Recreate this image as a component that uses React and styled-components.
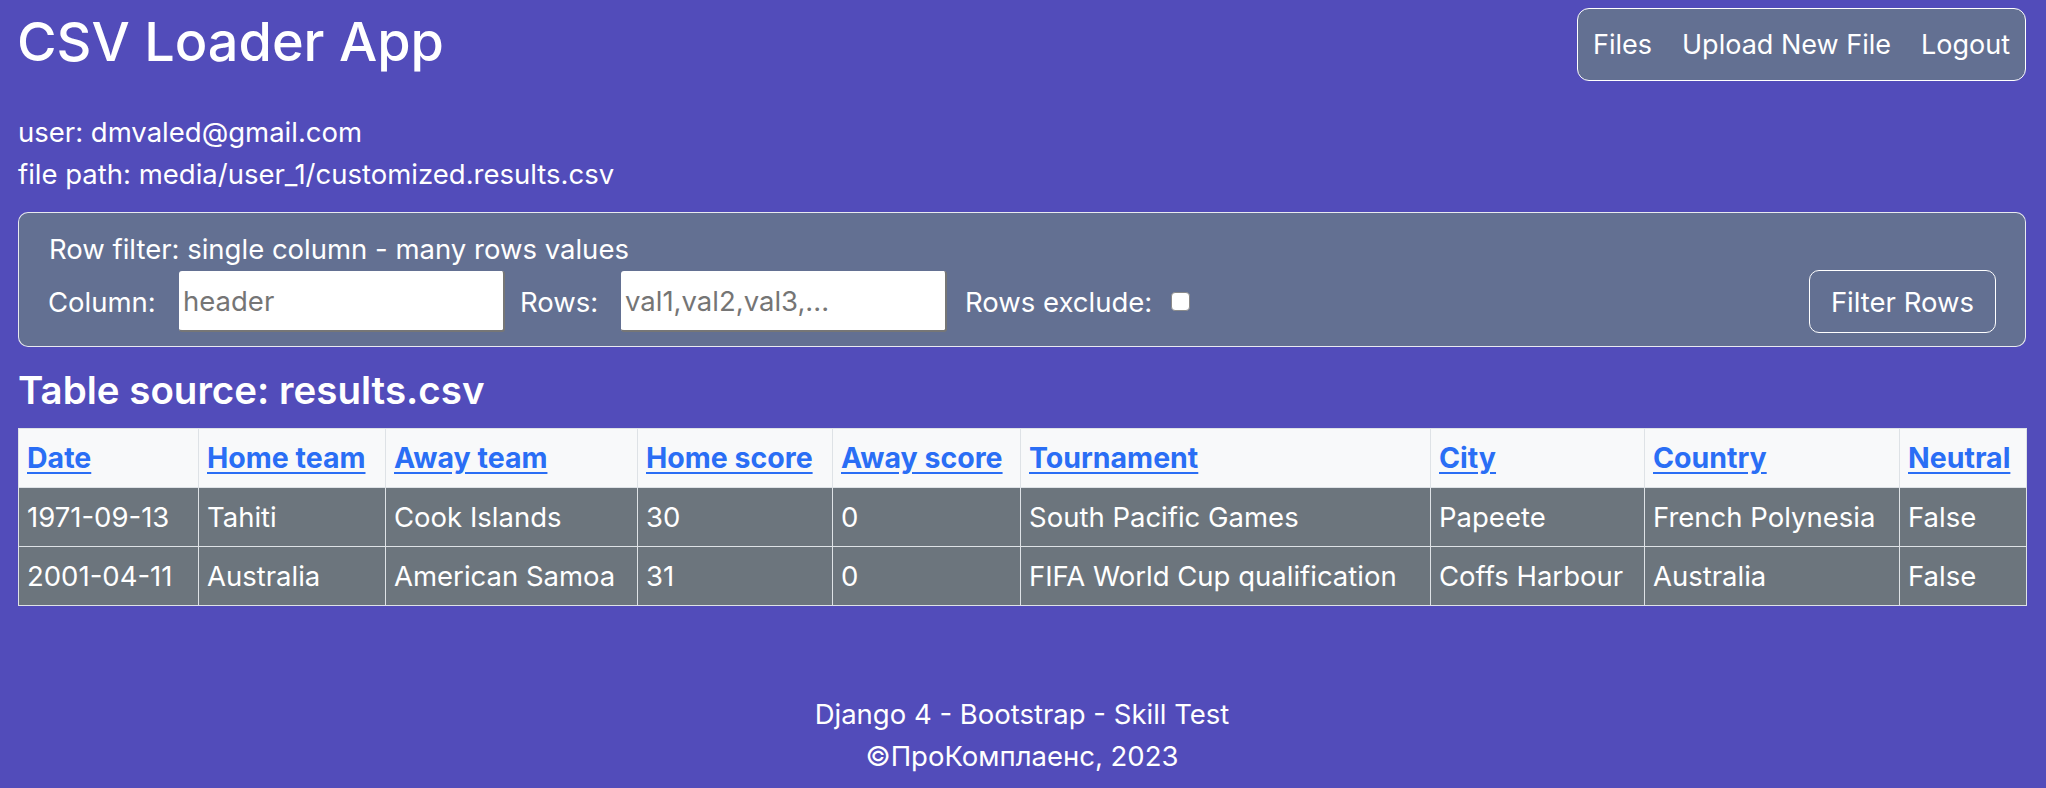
import React from 'react';
import styled, { createGlobalStyle } from 'styled-components';

const GlobalStyle = createGlobalStyle`
  body {
    margin: 0;
    background: #524cba;
    color: #fff;
    font-family: Inter, "Noto Sans", sans-serif;
    font-size: 27.5px;
    line-height: 42px;
  }
`;

const Page = styled.div`
  padding: 0 20px 0 18px;
`;

const Header = styled.header`
  display: flex;
  justify-content: space-between;
  align-items: flex-start;
  padding-top: 8px;
`;

const Title = styled.h1`
  margin: 1px 0 0 -1px;
  font-size: 54px;
  font-weight: 500;
  line-height: 66px;
`;

const Nav = styled.nav`
  display: flex;
  height: 71px;
  align-items: center;
  background: #637092;
  border: 1px solid #fff;
  border-radius: 12px;
`;

const NavLink = styled.a`
  color: #fff;
  text-decoration: none;
  padding: 0 15px;
  font-size: 27px;
`;

const Info = styled.div`
  margin-top: 30px;
`;

const Panel = styled.form`
  margin-top: 17px;
  background: #637092;
  border: 1px solid rgba(255, 255, 255, 0.85);
  border-radius: 10px;
  padding: 15px 29px 13px 29px;
`;

const Caption = styled.div`
  padding-left: 1px;
`;

const FilterRow = styled.div`
  display: flex;
  align-items: center;
  height: 63px;
`;

const Label = styled.label`
  flex: none;
  width: ${(p) => p.$w}px;
  margin-left: ${(p) => p.$ml || 0}px;
`;

const TextInput = styled.input`
  box-sizing: border-box;
  width: 326px;
  height: 61px;
  border: none;
  border-right: 2px solid #767676;
  border-bottom: 2px solid #767676;
  border-radius: 3px;
  background: #fff;
  padding: 0 4px;
  font-family: Inter, "Noto Sans", sans-serif;
  font-size: 27.5px;
  color: #212529;

  &::placeholder {
    color: #757575;
  }
`;

const Check = styled.input`
  appearance: none;
  margin: 0 0 0 -2px;
  width: 19px;
  height: 19px;
  background: #fff;
  border: 1px solid #8a8a8a;
  border-radius: 4px;
`;

const Button = styled.button`
  margin-left: auto;
  height: 63px;
  padding: 0 21px;
  background: transparent;
  color: #fff;
  border: 1px solid #fff;
  border-radius: 10px;
  font-family: Inter, "Noto Sans", sans-serif;
  font-size: 27.5px;
`;

const SubTitle = styled.h4`
  margin: 19px 0 13px;
  font-size: 38.5px;
  font-weight: 600;
  line-height: 49px;
`;

const Table = styled.table`
  width: 100%;
  table-layout: fixed;
  border-collapse: collapse;
  border: 1px solid #dee2e6;
`;

const Th = styled.th`
  box-sizing: border-box;
  width: ${(p) => p.$w}px;
  background: #f8f9fa;
  border: 1px solid #dee2e6;
  padding: 8px;
  text-align: left;
  white-space: nowrap;
  overflow: hidden;
`;

const SortLink = styled.a`
  color: #2a6ef5;
  font-weight: 700;
  font-size: 28.5px;
  text-decoration: underline;
  text-underline-offset: 4px;
`;

const Td = styled.td`
  background: #6c757d;
  border: 1px solid #dee2e6;
  padding: 8px;
  white-space: nowrap;
  overflow: hidden;
`;

const Footer = styled.footer`
  margin-top: 87px;
  text-align: center;
`;

const columns = [
  { title: 'Date', w: 180 },
  { title: 'Home team', w: 187 },
  { title: 'Away team', w: 252 },
  { title: 'Home score', w: 195 },
  { title: 'Away score', w: 188 },
  { title: 'Tournament', w: 410 },
  { title: 'City', w: 214 },
  { title: 'Country', w: 255 },
  { title: 'Neutral', w: 127 },
];

const rows = [
  ['1971-09-13', 'Tahiti', 'Cook Islands', '30', '0', 'South Pacific Games', 'Papeete', 'French Polynesia', 'False'],
  ['2001-04-11', 'Australia', 'American Samoa', '31', '0', 'FIFA World Cup qualification', 'Coffs Harbour', 'Australia', 'False'],
];

const App = () => {
  return (
    <Page>
      <GlobalStyle />
      <Header>
        <Title>CSV Loader App</Title>
        <Nav>
          <NavLink href="#">Files</NavLink>
          <NavLink href="#">Upload New File</NavLink>
          <NavLink href="#">Logout</NavLink>
        </Nav>
      </Header>
      <Info>
        <div>user: dmvaled@gmail.com</div>
        <div>file path: media/user_1/customized.results.csv</div>
      </Info>
      <Panel onSubmit={(e) => e.preventDefault()}>
        <Caption>Row filter: single column - many rows values</Caption>
        <FilterRow>
          <Label $w={131}>Column:</Label>
          <TextInput placeholder="header" />
          <Label $w={101} $ml={15}>Rows:</Label>
          <TextInput placeholder="val1,val2,val3,..." />
          <Label $w={208} $ml={18}>Rows exclude:</Label>
          <Check type="checkbox" />
          <Button type="submit">Filter Rows</Button>
        </FilterRow>
      </Panel>
      <SubTitle>Table source: results.csv</SubTitle>
      <Table>
        <thead>
          <tr>
            {columns.map((c) => (
              <Th key={c.title} $w={c.w}>
                <SortLink href="#">{c.title}</SortLink>
              </Th>
            ))}
          </tr>
        </thead>
        <tbody>
          {rows.map((r) => (
            <tr key={r[0]}>
              {r.map((v, i) => (
                <Td key={i}>{v}</Td>
              ))}
            </tr>
          ))}
        </tbody>
      </Table>
      <Footer>
        <div>Django 4 - Bootstrap - Skill Test</div>
        <div>©ПроКомплаенс, 2023</div>
      </Footer>
    </Page>
  );
};

export default App;
